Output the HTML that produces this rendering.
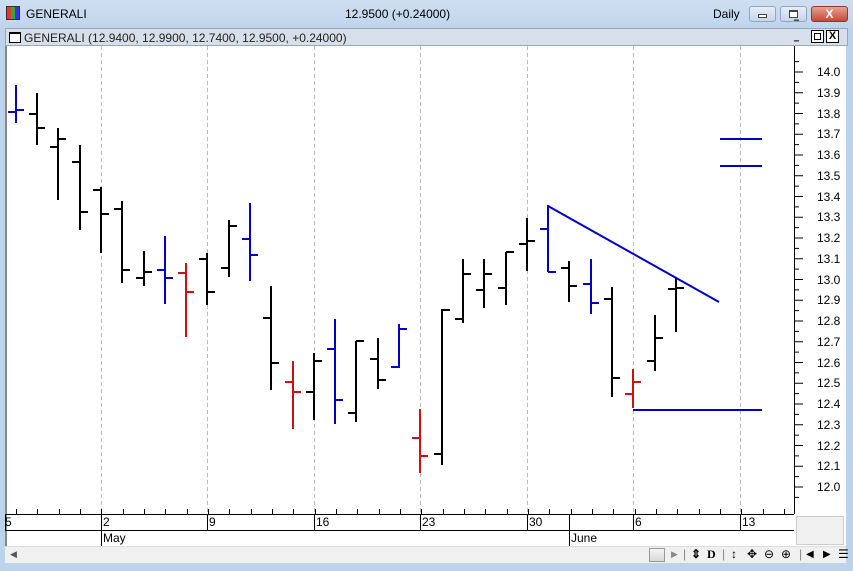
<!DOCTYPE html>
<html><head><meta charset="utf-8"><style>
*{margin:0;padding:0;box-sizing:border-box}
body{width:853px;height:571px;overflow:hidden;background:#bcd3ec;font-family:"Liberation Sans",sans-serif;position:relative}
.t{position:absolute;white-space:nowrap}
.i{position:absolute;top:547px;font-size:12px;color:#000;white-space:nowrap}
</style></head><body>
<div style="position:absolute;left:0;top:0;width:853px;height:29px;background:linear-gradient(#cfdff1,#bfd4ec)"></div>
<div style="position:absolute;left:6px;top:6px;width:14px;height:14px;border:1px solid #333;background:linear-gradient(90deg,#e33 0 33%,#3a3 33% 66%,#33e 66%)"></div>
<div class="t" style="left:26px;top:7px;font-size:12px;color:#000">GENERALI</div>
<div class="t" style="left:345px;top:7px;font-size:12px;color:#000">12.9500 (+0.24000)</div>
<div class="t" style="left:713px;top:7px;font-size:12px;color:#000">Daily</div>
<div style="position:absolute;left:749px;top:6px;width:27px;height:16px;border:1px solid #8fa6c2;border-radius:3px;background:linear-gradient(#e6eef8,#c6d6ea)"><div style="position:absolute;left:8px;top:7px;width:9px;height:4px;border:1px solid #444;background:#fff"></div></div>
<div style="position:absolute;left:780px;top:6px;width:27px;height:16px;border:1px solid #8fa6c2;border-radius:3px;background:linear-gradient(#e6eef8,#c6d6ea)"><div style="position:absolute;left:8px;top:3px;width:9px;height:8px;border:1px solid #444;border-top-width:2px;background:#fff"></div></div>
<div style="position:absolute;left:811px;top:6px;width:37px;height:16px;border:1px solid #8a3c30;border-radius:3px;background:linear-gradient(#e8a090,#c5483a);color:#fff;font-size:12px;font-weight:bold;text-align:center;line-height:14px">X</div>
<div style="position:absolute;left:5px;top:28px;width:843px;height:18px;background:#d7e0ea;border:1px solid #99a8b8"></div>
<div style="position:absolute;left:9px;top:32px;width:12px;height:11px;border:1px solid #000;border-top-width:2px;background:#fff"></div>
<div class="t" style="left:24px;top:31px;font-size:12px;color:#222">GENERALI (12.9400, 12.9900, 12.7400, 12.9500, +0.24000)</div>
<div style="position:absolute;left:811px;top:30px;width:13px;height:13px;border:1px solid #000;background:#fff"><div style="position:absolute;left:2px;top:2px;width:7px;height:7px;border:1px solid #000"></div></div>
<div style="position:absolute;left:826px;top:30px;width:13px;height:13px;border:1px solid #000;background:#fff;font-size:11px;font-weight:bold;text-align:center;line-height:11px">X</div>
<div style="position:absolute;left:5px;top:46px;width:841px;height:500px;background:#fff"></div>
<div style="position:absolute;left:5px;top:46px;width:2px;height:500px;background:#888"></div>
<svg style="position:absolute;left:0;top:0" width="853" height="571" viewBox="0 0 853 571">
<g stroke="#bbb" stroke-dasharray="4,3" stroke-width="1">
<line x1="101.5" y1="46" x2="101.5" y2="514"/><line x1="207.5" y1="46" x2="207.5" y2="514"/><line x1="314.5" y1="46" x2="314.5" y2="514"/><line x1="420.5" y1="46" x2="420.5" y2="514"/><line x1="527.5" y1="46" x2="527.5" y2="514"/><line x1="633.5" y1="46" x2="633.5" y2="514"/><line x1="740.5" y1="46" x2="740.5" y2="514"/>
</g>
<line x1="794.5" y1="46" x2="794.5" y2="514" stroke="#000"/>
<g stroke="#000" stroke-width="1" id="ticks"></g>
<g stroke-width="2" fill="none" id="bars"></g>
<g stroke="#0000c8" stroke-width="2">
<line x1="548" y1="206" x2="719" y2="302"/>
<line x1="633" y1="410" x2="762" y2="410"/>
<line x1="720" y1="139" x2="762" y2="139"/>
<line x1="720" y1="166" x2="762" y2="166"/>
</g>
<line x1="5" y1="514.5" x2="794" y2="514.5" stroke="#000"/>
<line x1="5" y1="530.5" x2="794" y2="530.5" stroke="#000"/>
<g stroke="#000" id="dt"></g>
<line x1="101.5" y1="514" x2="101.5" y2="546" stroke="#000"/>
<line x1="569.5" y1="514" x2="569.5" y2="546" stroke="#000"/>
</svg>
<div id="labels"></div>
<div style="position:absolute;left:796px;top:516px;width:48px;height:29px;background:#f0f0f0;border:1px solid #ccc"></div>
<div style="position:absolute;left:5px;top:546px;width:841px;height:17px;background:#f0f0f0;border-top:1px solid #ddd"></div>
<div class="t" style="left:10px;top:549px;font-size:9px;color:#555">◀</div>
<div style="position:absolute;left:649px;top:548px;width:16px;height:14px;border:1px solid #999;background:linear-gradient(#f4f4f4,#d8d8d8)"></div>
<div class="i" style="left:671px;top:549px;font-size:9px;color:#888">▶</div>
<div class="i" style="left:683px;color:#888">|</div>
<div class="i" style="left:691px;font-weight:bold">&#8661;</div>
<div class="i" style="left:707px;font-family:'Liberation Serif',serif;font-weight:bold">D</div>
<div class="i" style="left:722px;color:#888">|</div>
<div class="i" style="left:731px;font-weight:bold">&#8597;</div>
<div class="i" style="left:747px">&#10021;</div>
<div class="i" style="left:764px">&#8854;</div>
<div class="i" style="left:781px">&#8853;</div>
<div class="i" style="left:799px;color:#888">|</div>
<div class="i" style="left:806px;top:549px;font-size:10px">◀</div>
<div class="i" style="left:823px;top:549px;font-size:10px">▶</div>
<div class="i" style="left:838px">&#9776;</div>
<script>
var y=p=>72+(14.0-p)*207.5;
var t='',lb='';
for(var i=0;i<=20;i++){var yy=y(14.0-i*0.1);t+=`<line x1="794" y1="${yy}" x2="803" y2="${yy}"/>`;lb+=`<div class="t" style="left:817px;top:${yy-7}px;font-size:12px;color:#000">${(14.0-i*0.1).toFixed(1)}</div>`;}
for(var i=-2;i<=21;i++){var yy=y(14.05-i*0.1);t+=`<line x1="794" y1="${yy}" x2="799" y2="${yy}"/>`;}
document.getElementById('ticks').innerHTML=t;
var d='';for(var x=16;x<794;x+=21.33){d+=`<line x1="${Math.round(x)+.5}" y1="509" x2="${Math.round(x)+.5}" y2="514"/>`;}
[5,101,207,314,420,527,633,740].forEach(x=>{d+=`<line x1="${x+.5}" y1="514" x2="${x+.5}" y2="530"/>`});
document.getElementById('dt').innerHTML=d;
[[5,'5'],[103,'2'],[209,'9'],[316,'16'],[422,'23'],[529,'30'],[635,'6'],[742,'13']].forEach(a=>{lb+=`<div class="t" style="left:${a[0]}px;top:515px;font-size:12px;color:#000">${a[1]}</div>`});
lb+=`<div class="t" style="left:103px;top:531px;font-size:12px">May</div><div class="t" style="left:571px;top:531px;font-size:12px">June</div>`;
document.getElementById('labels').innerHTML=lb;
var B=[[16,85,123,112,110,'b'],[37,93,145,114,128,'k'],[58,128,200,147,139,'k'],[80,145,230,162,212,'k'],[101,187,253,190,214,'k'],[122,201,283,209,270,'k'],[144,251,286,278,272,'k'],[165,236,304,270,278,'b'],[186,263,337,273,292,'r'],[207,253,305,259,292,'k'],[229,220,277,268,226,'k'],[250,203,281,239,255,'b'],[271,286,390,318,363,'k'],[293,361,429,382,392,'r'],[314,353,420,392,361,'k'],[335,319,424,349,400,'b'],[356,341,422,413,341,'k'],[378,338,389,359,380,'k'],[399,324,368,367,329,'b'],[420,409,473,438,456,'r'],[442,309,465,454,310,'k'],[463,259,323,319,274,'k'],[484,259,308,290,274,'k'],[506,252,305,288,252,'k'],[527,218,271,244,241,'k'],[548,205,272,229,272,'b'],[569,261,302,268,286,'k'],[591,259,314,284,303,'b'],[612,287,397,299,378,'k'],[633,369,408,394,382,'r'],[655,315,371,361,338,'k'],[676,278,332,289,288,'k']];
var C={b:'#0000c8',k:'#000',r:'#d01010'};var s='';
B.forEach(b=>{var c=C[b[5]];s+=`<g stroke="${c}"><line x1="${b[0]}" y1="${b[1]}" x2="${b[0]}" y2="${b[2]}"/><line x1="${b[0]-8}" y1="${b[3]}" x2="${b[0]}" y2="${b[3]}"/><line x1="${b[0]}" y1="${b[4]}" x2="${b[0]+8}" y2="${b[4]}"/></g>`});
document.getElementById('bars').innerHTML=s;
</script>
</body></html>
